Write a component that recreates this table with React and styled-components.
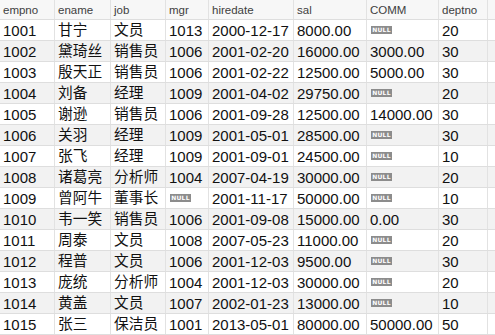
import React from "react";
import styled, { createGlobalStyle } from "styled-components";

const Global = createGlobalStyle`
  html, body { margin: 0; padding: 0; background: #ffffff; }
  body { font-family: "Liberation Sans", "Noto Sans CJK SC", Arial, sans-serif; }
`;

const COLS = "55px 56px 55px 43px 85px 73px 72px 49px 1fr";

const Grid = styled.div`
  width: 495px;
  height: 335px;
  overflow: hidden;
  display: flex;
  flex-direction: column;
`;

const Row = styled.div`
  display: grid;
  grid-template-columns: ${COLS};
  height: ${(p) => (p.$head ? "20px" : "21px")};
  box-sizing: border-box;
  border-bottom: 1px solid #dedede;
  background: ${(p) => (p.$head ? "#f7f7f7" : p.$alt ? "#f2f2f2" : "#ffffff")};
  flex-shrink: 0;
`;

const HeadCell = styled.div`
  box-sizing: border-box;
  border-right: 1px solid #e2e2e2;
  padding: 0 0 0 3px;
  font-size: 11.5px;
  line-height: 14px;
  color: #404040;
  display: flex;
  align-items: center;
  white-space: nowrap;
`;

const Cell = styled.div`
  box-sizing: border-box;
  border-right: 1px solid #e2e2e2;
  padding: 0 0 0 3px;
  font-size: ${(p) => (p.$cjk ? "14.7px" : "15px")};
  line-height: 17px;
  color: #111111;
  display: flex;
  align-items: center;
  white-space: nowrap;
  font-family: "Liberation Sans", "Noto Sans CJK SC", sans-serif;
`;

const Filler = styled.div``;

const NullBadge = styled.span`
  display: inline-flex;
  align-items: center;
  justify-content: center;
  width: 21px;
  height: 8px;
  margin-left: 1px;
  background: #8c8c8c;
  color: #ffffff;
  font-family: "DejaVu Sans", "Liberation Sans", sans-serif;
  font-weight: bold;
  font-size: 6px;
  line-height: 8px;
  letter-spacing: 0.2px;
`;

const headers = ["empno", "ename", "job", "mgr", "hiredate", "sal", "COMM", "deptno"];

const data = [
  ["1001", "甘宁", "文员", "1013", "2000-12-17", "8000.00", null, "20"],
  ["1002", "黛琦丝", "销售员", "1006", "2001-02-20", "16000.00", "3000.00", "30"],
  ["1003", "殷天正", "销售员", "1006", "2001-02-22", "12500.00", "5000.00", "30"],
  ["1004", "刘备", "经理", "1009", "2001-04-02", "29750.00", null, "20"],
  ["1005", "谢逊", "销售员", "1006", "2001-09-28", "12500.00", "14000.00", "30"],
  ["1006", "关羽", "经理", "1009", "2001-05-01", "28500.00", null, "30"],
  ["1007", "张飞", "经理", "1009", "2001-09-01", "24500.00", null, "10"],
  ["1008", "诸葛亮", "分析师", "1004", "2007-04-19", "30000.00", null, "20"],
  ["1009", "曾阿牛", "董事长", null, "2001-11-17", "50000.00", null, "10"],
  ["1010", "韦一笑", "销售员", "1006", "2001-09-08", "15000.00", "0.00", "30"],
  ["1011", "周泰", "文员", "1008", "2007-05-23", "11000.00", null, "20"],
  ["1012", "程普", "文员", "1006", "2001-12-03", "9500.00", null, "30"],
  ["1013", "庞统", "分析师", "1004", "2001-12-03", "30000.00", null, "20"],
  ["1014", "黄盖", "文员", "1007", "2002-01-23", "13000.00", null, "10"],
  ["1015", "张三", "保洁员", "1001", "2013-05-01", "80000.00", "50000.00", "50"],
];

export default function App() {
  return (
    <>
      <Global />
      <Grid>
        <Row $head>
          {headers.map((h) => (
            <HeadCell key={h}>{h}</HeadCell>
          ))}
          <Filler />
        </Row>
        {data.map((r, i) => (
          <Row key={r[0]} $alt={i % 2 === 1}>
            {r.map((v, j) => (
              <Cell key={j} $cjk={j === 1 || j === 2}>
                {v === null ? <NullBadge>NULL</NullBadge> : v}
              </Cell>
            ))}
            <Filler />
          </Row>
        ))}
      </Grid>
    </>
  );
}
